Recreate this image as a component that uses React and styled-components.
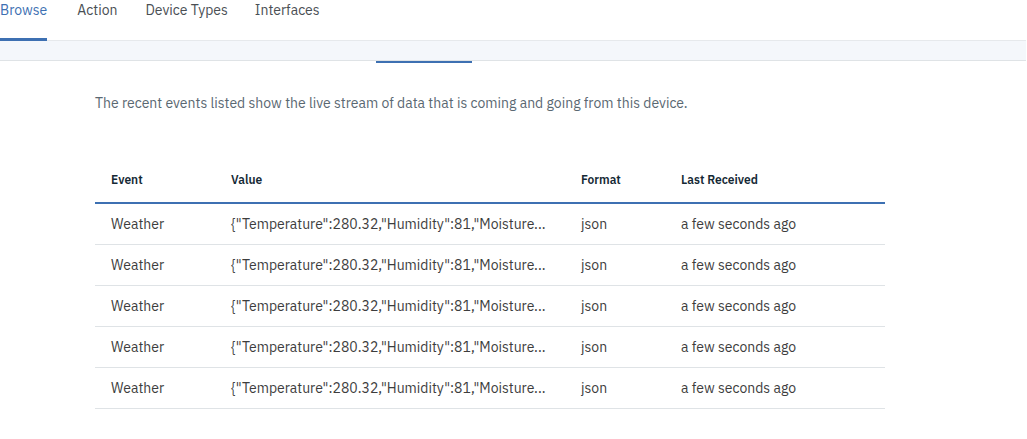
import React from "react";
import styled, { createGlobalStyle } from "styled-components";

const Global = createGlobalStyle`
  html, body { margin: 0; padding: 0; background: #fff; }
  body { font-family: "IBM Plex Sans", Roboto, "Noto Sans", sans-serif; }
`;

const Page = styled.div`
  width: 1027px;
  height: 439px;
  overflow: hidden;
  background: #fff;
`;

const TabBar = styled.nav`
  display: flex;
  height: 41px;
`;

const Tab = styled.div`
  box-sizing: border-box;
  height: 41px;
  margin-right: ${(p) => p.$gap || 29}px;
  padding-top: 2px;
  font-size: 14px;
  line-height: 17px;
  color: ${(p) => (p.$active ? "#3d70b2" : "#4a4f54")};
  border-bottom: 3px solid ${(p) => (p.$active ? "#3d70b2" : "transparent")};
`;

const Band = styled.div`
  height: 19px;
  margin-right: 1px;
  background: #f4f7fb;
  border-top: 1px solid #e6e9ec;
  border-bottom: 1px solid #dfe3e6;
  margin-top: -1px;
`;

const Indicator = styled.div`
  width: 96px;
  height: 2px;
  margin-left: 376px;
  background: #3d70b2;
`;

const Content = styled.div`
  padding: 30px 0 0 95px;
`;

const Intro = styled.p`
  margin: 0;
  font-size: 14px;
  line-height: 20px;
  color: #5a6872;
`;

const Table = styled.div`
  width: 790px;
  margin-top: 45px;
`;

const Row = styled.div`
  display: grid;
  grid-template-columns: 120px 350px 100px 220px;
  height: ${(p) => (p.$head ? "44px" : "40px")};
  align-items: center;
  border-bottom: ${(p) => (p.$head ? "2px solid #3d70b2" : "1px solid #dfe3e6")};
`;

const Cell = styled.div`
  padding: 0 16px;
  font-size: ${(p) => (p.$head ? "12px" : "14px")};
  font-weight: ${(p) => (p.$head ? 600 : 400)};
  color: ${(p) => (p.$head ? "#152935" : "#3d3d3d")};
  white-space: nowrap;
  overflow: hidden;
  text-overflow: ellipsis;
  margin-top: ${(p) => (p.$head ? "-2px" : "-1px")};
`;

const rows = Array.from({ length: 5 }, () => ({
  event: "Weather",
  value: '{"Temperature":280.32,"Humidity":81,"Moisture...',
  format: "json",
  received: "a few seconds ago",
}));

export default function App() {
  return (
    <Page>
      <Global />
      <TabBar>
        <Tab $active $gap={30}>Browse</Tab>
        <Tab $gap={28}>Action</Tab>
        <Tab $gap={27}>Device Types</Tab>
        <Tab>Interfaces</Tab>
      </TabBar>
      <Band />
      <Indicator />
      <Content>
        <Intro>
          The recent events listed show the live stream of data that is coming and going from this device.
        </Intro>
        <Table>
          <Row $head>
            <Cell $head>Event</Cell>
            <Cell $head>Value</Cell>
            <Cell $head>Format</Cell>
            <Cell $head>Last Received</Cell>
          </Row>
          {rows.map((r, i) => (
            <Row key={i}>
              <Cell>{r.event}</Cell>
              <Cell>{r.value}</Cell>
              <Cell>{r.format}</Cell>
              <Cell>{r.received}</Cell>
            </Row>
          ))}
        </Table>
      </Content>
    </Page>
  );
}
